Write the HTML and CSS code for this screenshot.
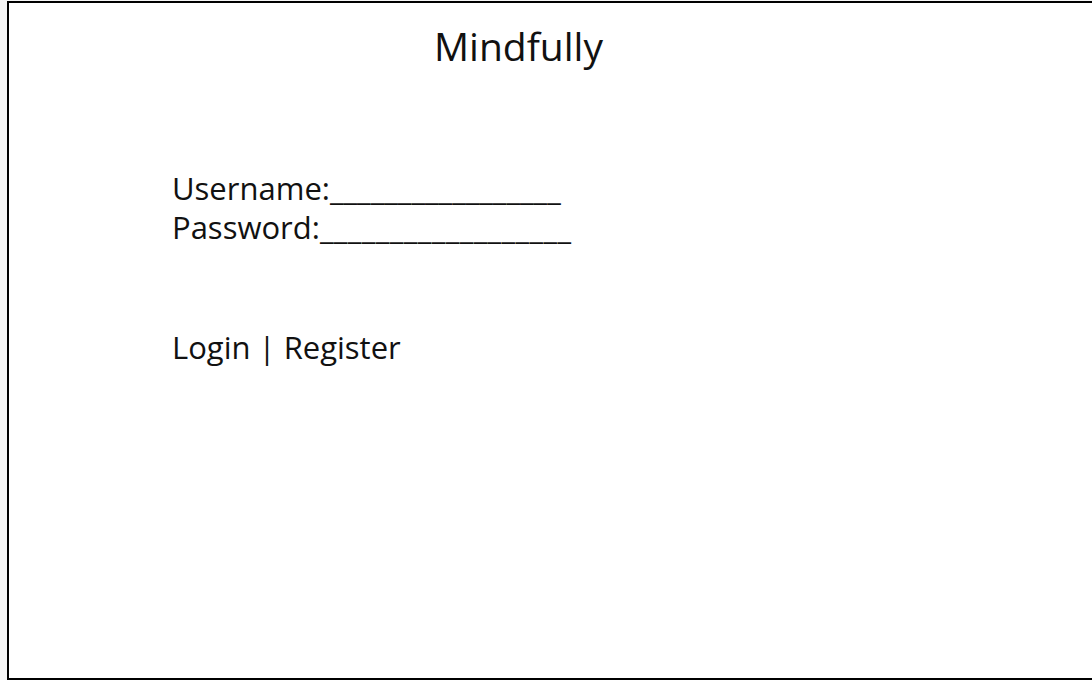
FILE: index.html
```html
<!DOCTYPE html>
<html>
<head>
<meta charset="utf-8">
<link rel="stylesheet" href="styles.css">
</head>
<body>
<div class="frame">
  <h1 class="title">Mindfully</h1>
  <div class="form">
    <div class="field">Username:_________________</div>
    <div class="field">Password:<span class="blank">__________________</span></div>
  </div>
  <div class="actions">Login | Register</div>
</div>
</body>
</html>
```

FILE: styles.css
```css
html, body {
  margin: 0;
  padding: 0;
  background: #f5f5f5;
  overflow: hidden;
}
body {
  width: 1092px;
  height: 680px;
  font-family: "Open Sans", "Noto Sans", sans-serif;
  color: #111;
}
.frame {
  box-sizing: border-box;
  margin: 1px 0 0 7px;
  width: 1100px;
  height: 679px;
  border: 2px solid #000;
  background: #fff;
  display: flex;
  flex-direction: column;
}
.title {
  margin: 0;
  padding: 21px 0 0 425px;
  font-size: 39px;
  font-weight: 400;
  line-height: 44px;
}
.form {
  padding: 101px 0 0 163px;
  font-size: 31px;
  line-height: 39px;
}
.blank {
  letter-spacing: 0.4px;
}
.actions {
  padding: 81px 0 0 163px;
  font-size: 31px;
  line-height: 39px;
}
```
